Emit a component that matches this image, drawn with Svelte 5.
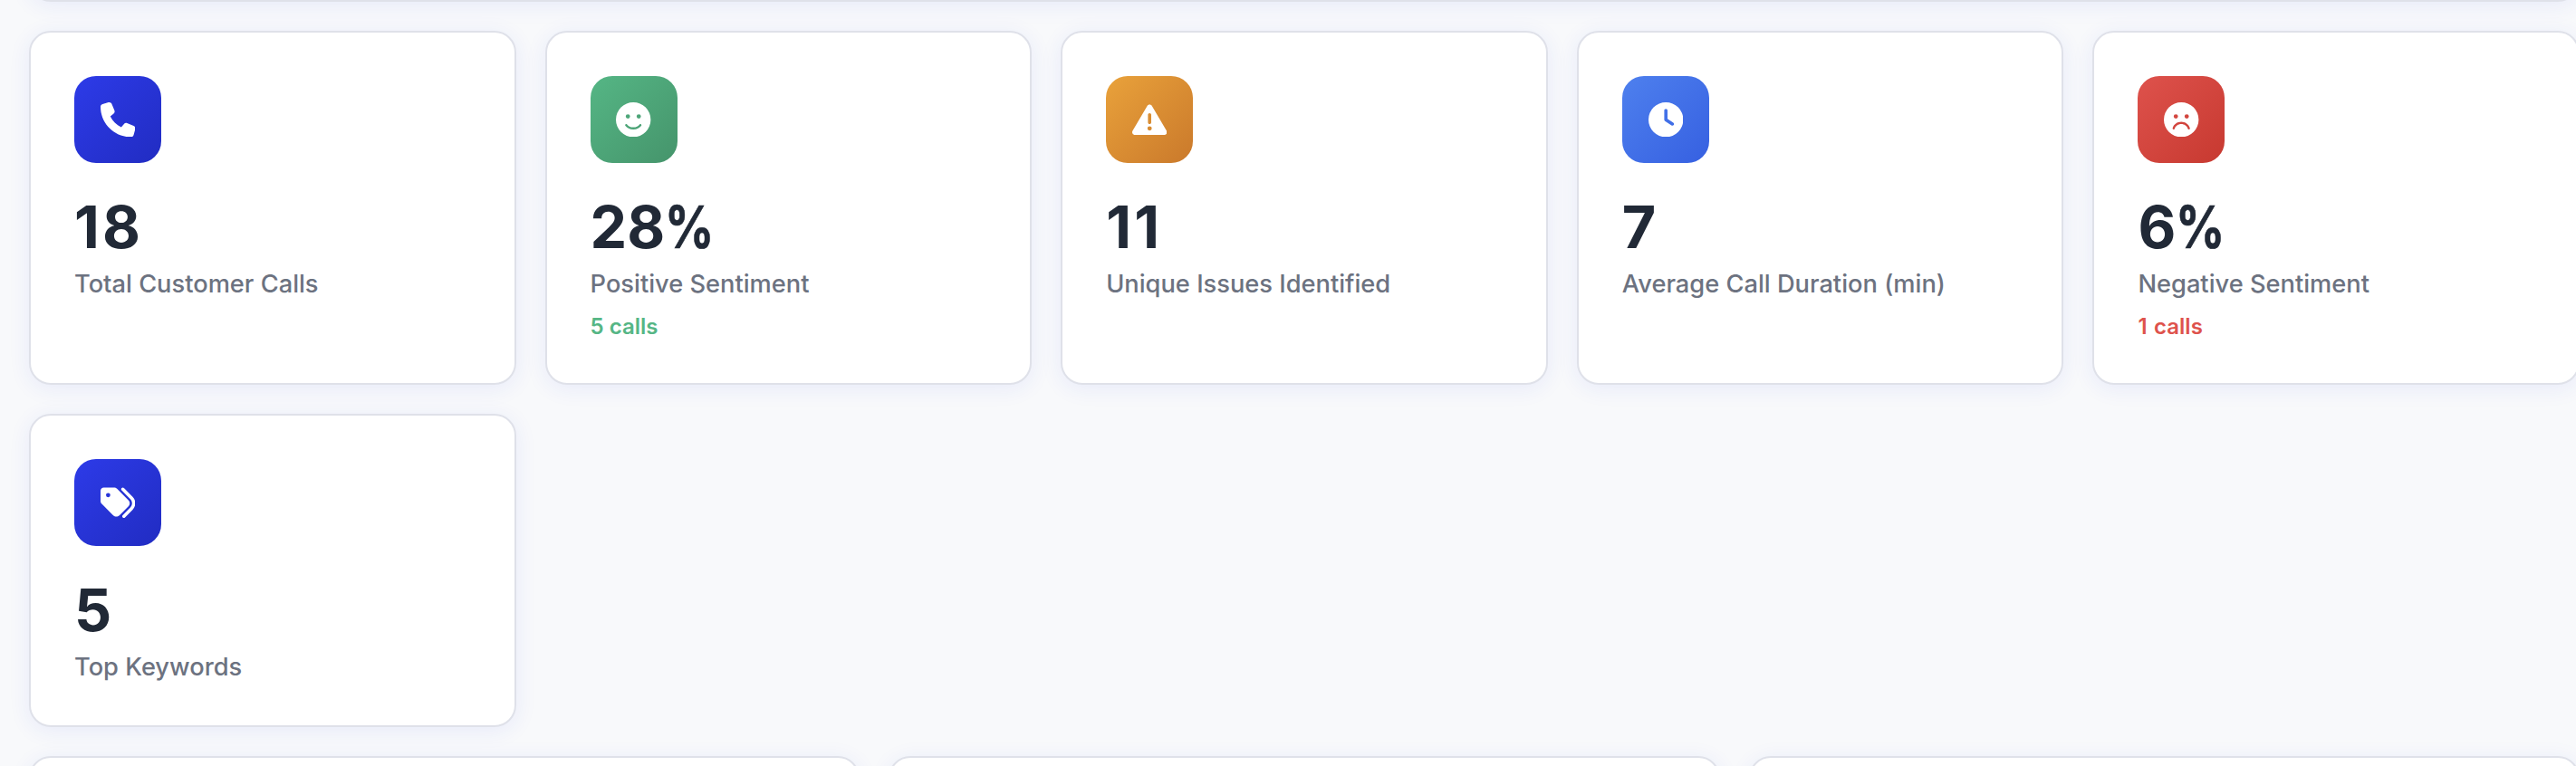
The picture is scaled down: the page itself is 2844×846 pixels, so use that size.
<script>
  const eyes =
    'M144.4 208a32 32 0 1 1 64 0 32 32 0 1 1 -64 0zm192-32a32 32 0 1 1 0 64 32 32 0 1 1 0-64z';
  const disc = 'M256 512A256 256 0 1 0 256 0a256 256 0 1 0 0 512z';

  const icons = {
    phone:
      'M164.9 24.6c-7.7-18.6-28-28.5-47.4-23.2l-88 24C12.1 30.2 0 46 0 64C0 311.4 200.6 512 448 512c18 0 33.8-12.1 38.6-29.5l24-88c5.3-19.4-4.6-39.7-23.2-47.4l-96-40c-16.3-6.8-35.2-2.1-46.3 11.6L304.7 368C234.3 334.7 177.3 277.7 144 207.3L193.3 167c13.7-11.2 18.4-30 11.6-46.3l-40-96z',
    smile:
      disc +
      'M164.1 325.5C182 346.2 212.6 368 256 368s74-21.8 91.9-42.5c5.8-6.7 15.9-7.4 22.6-1.6s7.4 15.9 1.6 22.6C349.8 372.1 311.1 400 256 400s-93.8-27.9-116.1-53.5c-5.8-6.7-5.1-16.8 1.6-22.6s16.8-5.1 22.6 1.6z' +
      eyes,
    warning:
      'M256 32c14.2 0 27.3 7.5 34.5 19.8l216 368c7.3 12.4 7.3 27.7 .2 40.1S486.3 480 472 480H40c-14.3 0-27.6-7.7-34.7-20.1s-7-27.8 .2-40.1l216-368C228.7 39.5 241.8 32 256 32zm0 128c-13.3 0-24 10.7-24 24V296c0 13.3 10.7 24 24 24s24-10.7 24-24V184c0-13.3-10.7-24-24-24zm32 224a32 32 0 1 0 -64 0 32 32 0 1 0 64 0z',
    clock:
      disc +
      'M232 120V256c0 8 4 15.5 10.7 20l96 64c11 7.4 25.9 4.4 33.3-6.7s4.4-25.9-6.7-33.3L280 243.2V120c0-13.3-10.7-24-24-24s-24 10.7-24 24z',
    frown:
      disc +
      'M159.3 388.7c-2.6 8.4-11.6 13.2-20 10.5s-13.2-11.6-10.5-20C145.2 326.1 196.3 288 256 288s110.8 38.1 127.3 91.3c2.6 8.4-2.1 17.4-10.5 20s-17.4-2.1-20-10.5C340.5 349.4 302.1 320 256 320s-84.5 29.4-96.7 68.7z' +
      eyes,
    tags:
      'M345 39.1L472.8 168.4c52.4 53 52.4 138.2 0 191.2L360.8 472.9c-9.3 9.4-24.5 9.5-33.9 .2s-9.5-24.5-.2-33.9L438.6 325.9c33.9-34.3 33.9-89.4 0-123.7L310.9 72.9c-9.3-9.4-9.2-24.6 .2-33.9s24.6-9.2 33.9 .2zM0 229.5V80C0 53.5 21.5 32 48 32H197.5c17 0 33.3 6.7 45.3 18.7l168 168c25 25 25 65.5 0 90.5L277.3 442.7c-25 25-65.5 25-90.5 0l-168-168C6.7 262.7 0 246.5 0 229.5zM144 144a32 32 0 1 0 -64 0 32 32 0 1 0 64 0z'
  };

  const stats = [
    { icon: 'phone', tone: 'primary', value: '18', label: 'Total Customer Calls' },
    { icon: 'smile', tone: 'success', value: '28', unit: '%', label: 'Positive Sentiment', note: '5 calls' },
    { icon: 'warning', tone: 'warning', value: '11', label: 'Unique Issues Identified' },
    { icon: 'clock', tone: 'info', value: '7', label: 'Average Call Duration (min)' },
    { icon: 'frown', tone: 'danger', value: '6', unit: '%', label: 'Negative Sentiment', note: '1 calls' },
    { icon: 'tags', tone: 'primary', value: '5', label: 'Top Keywords' }
  ];
</script>

<main class="page">
  <header class="card banner"></header>

  <section class="stats">
    {#each stats as stat}
      <article class="card stat">
        <div class="icon {stat.tone}">
          <svg viewBox="0 0 512 512" aria-hidden="true">
            <path d={icons[stat.icon]} fill="currentColor" fill-rule="evenodd" />
          </svg>
        </div>
        <div class="value" class:loose={stat.value.startsWith('1')}>{stat.value}{#if stat.unit}<span class="unit">{stat.unit}</span>{/if}</div>
        <div class="label">{stat.label}</div>
        {#if stat.note}
          <div class="note {stat.tone}-text">{stat.note}</div>
        {/if}
      </article>
    {/each}
  </section>

  <section class="panels">
    <div class="card"></div>
    <div class="card"></div>
    <div class="card"></div>
  </section>
</main>

<style>
  :global(body) {
    margin: 0;
    background: #f8f9fb;
    overflow: hidden;
  }

  .page {
    box-sizing: border-box;
    width: 2880px;
    height: 846px;
    padding: 0 32px;
    overflow: hidden;
    display: flex;
    flex-direction: column;
    gap: 32px;
    background: #f8f9fb;
    font-family: Inter, 'Liberation Sans', sans-serif;
  }

  .card {
    box-sizing: border-box;
    background: #fff;
    border: 2px solid #dfe1e9;
    border-radius: 24px;
    box-shadow: 0 4px 24px rgba(44, 58, 230, 0.08);
  }

  .banner {
    flex: none;
    height: 80px;
    margin-top: -78px;
  }

  .stats {
    flex: none;
    display: grid;
    grid-template-columns: repeat(5, 1fr);
    grid-template-rows: 390.8px 346px;
    gap: 32px;
  }

  .stat {
    padding: 48px;
  }

  .icon {
    display: flex;
    align-items: center;
    justify-content: center;
    width: 96px;
    height: 96px;
    margin-bottom: 33px;
    border-radius: 24px;
    color: #fff;
  }

  .icon svg {
    display: block;
    width: 38.4px;
    height: 38.4px;
  }

  .primary { background: linear-gradient(135deg, #2d3be8, #212cc2); }
  .success { background: linear-gradient(135deg, #55b685, #45946b); }
  .warning { background: linear-gradient(135deg, #e9a23b, #ca792b); }
  .info { background: linear-gradient(135deg, #4e80ee, #3660e1); }
  .danger { background: linear-gradient(135deg, #de524c, #c73930); }

  .value {
    margin-bottom: 8px;
    font-size: 64.5px;
    font-weight: 740;
    line-height: 76px;
    color: #212936;
  }

  .loose {
    letter-spacing: 3.2px;
  }

  .unit {
    display: inline-block;
    margin-left: 0;
    transform: scaleX(0.83);
    transform-origin: left;
    -webkit-text-stroke: 0.6px currentColor;
  }

  .label {
    font-size: 27.25px;
    font-weight: 500;
    line-height: 34px;
    color: #6c7280;
  }

  .note {
    margin-top: 15px;
    font-size: 24px;
    font-weight: 600;
    line-height: 29px;
  }

  .success-text { color: #55b685; }
  .danger-text { color: #de524c; word-spacing: 1.5px; }

  .panels {
    flex: none;
    display: grid;
    grid-template-columns: repeat(3, 1fr);
    gap: 32px;
    height: 400px;
  }
</style>
